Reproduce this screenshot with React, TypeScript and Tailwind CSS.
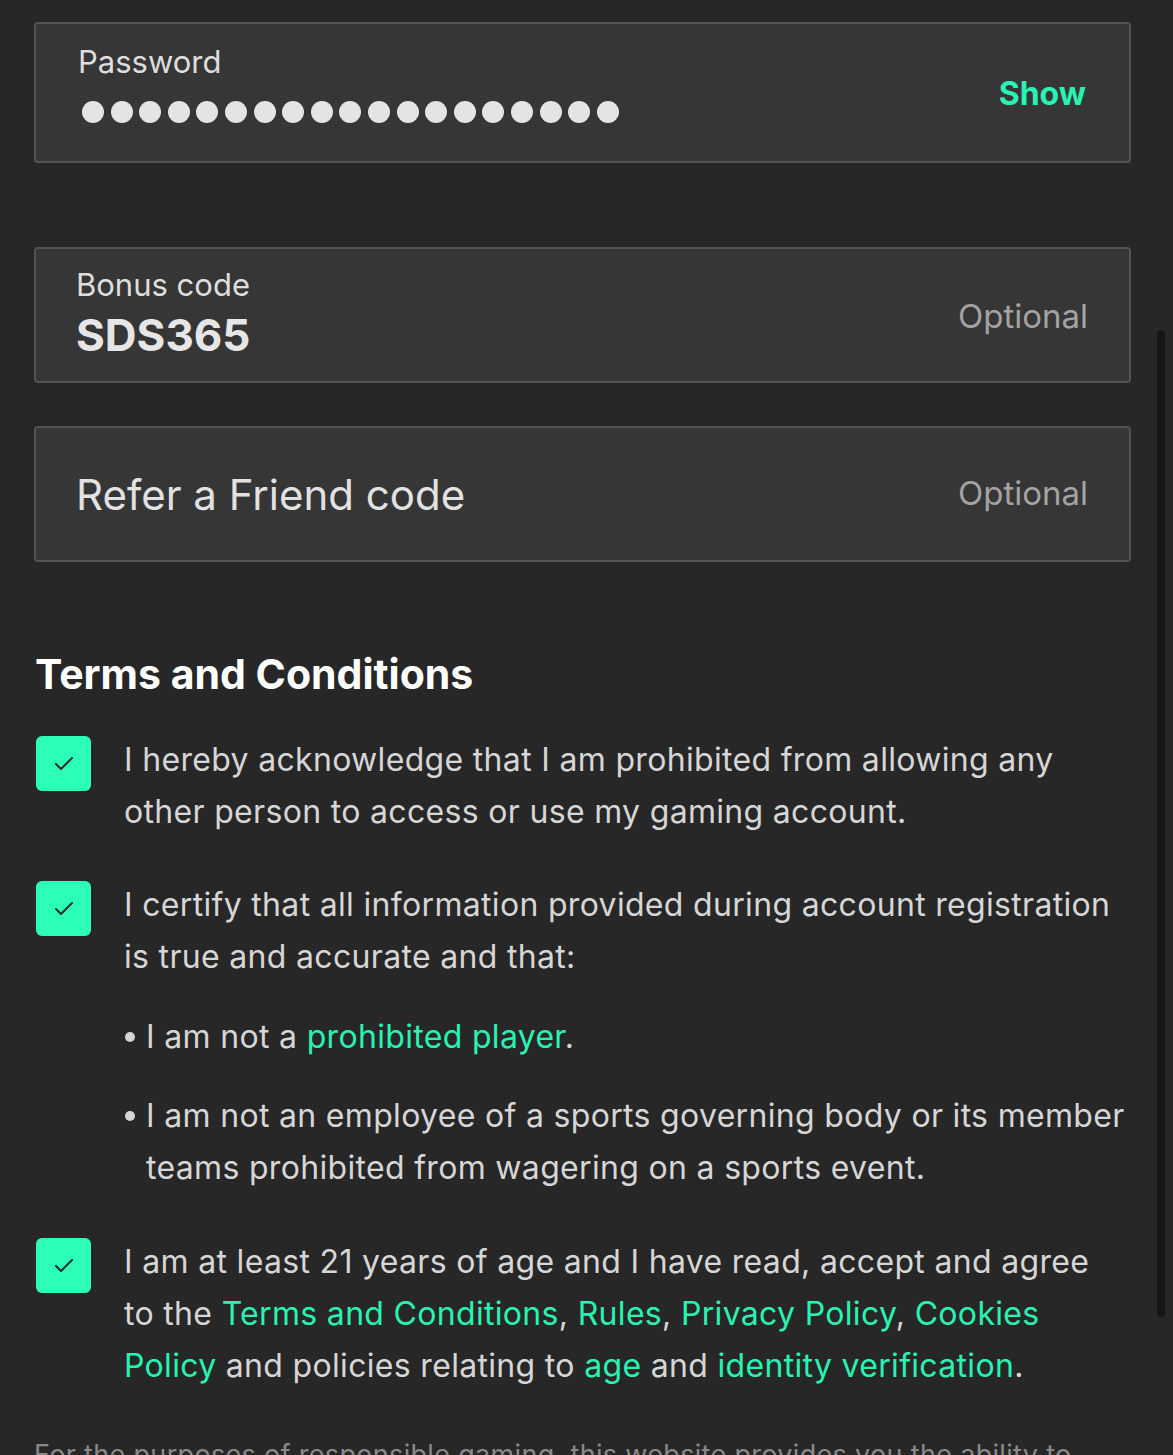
import { Check } from "lucide-react";

const green = "text-[#2af2b2]";

const Box = () => (
  <div className="mt-[2px] flex h-[55px] w-[55px] shrink-0 items-center justify-center rounded-[6px] bg-[#2bffb8]">
    <Check size={24} strokeWidth={2} className="text-[#2b2b2b]" />
  </div>
);

const Link = ({ children }: { children: React.ReactNode }) => (
  <span className={green}>{children}</span>
);

const Bullet = ({ children }: { children: React.ReactNode }) => (
  <div className="flex items-start">
    <div className="flex h-[52px] w-[22px] shrink-0 items-center">
      <span className="ml-[1px] h-[10px] w-[10px] rounded-full bg-[#d6d6d6]" />
    </div>
    <p>{children}</p>
  </div>
);

export default function App() {
  return (
    <div
      className="relative h-[1455px] w-[1173px] overflow-hidden bg-[#272727] pl-[34px] pr-[42px] pt-[22px] text-[#d6d6d6]"
      style={{ fontFamily: "Inter, 'Noto Sans', sans-serif" }}
    >
      {/* password */}
      <div className="flex h-[141px] items-start justify-between rounded-[4px] border-2 border-[#535353] bg-[#363636] pl-[42px] pr-[43px] pt-[20px]">
        <div className="flex flex-col">
          <span className="text-[31px] leading-[36px] text-[#dedede]">Password</span>
          <div className="mt-[21px] flex gap-[6.6px] pl-[4px]">
            {Array.from({ length: 19 }).map((_, i) => (
              <span key={i} className="h-[22px] w-[22px] rounded-full bg-[#e4e4e4]" />
            ))}
          </div>
        </div>
        <span className={`mt-[30px] text-[32px] font-bold leading-[40px] ${green}`}>Show</span>
      </div>

      {/* bonus code */}
      <div className="mt-[84px] flex h-[136px] items-start justify-between rounded-[4px] border-2 border-[#535353] bg-[#363636] pl-[40px] pr-[41px] pt-[18px]">
        <div className="flex flex-col">
          <span className="text-[31px] leading-[36px] text-[#dedede]">Bonus code</span>
          <span className="mt-[7px] text-[44px] font-bold leading-[50px] text-[#e6e6e6]">SDS365</span>
        </div>
        <span className="mt-[29px] text-[33px] leading-[40px] text-[#a3a3a3]">Optional</span>
      </div>

      {/* refer */}
      <div className="mt-[43px] flex h-[136px] items-center justify-between rounded-[4px] border-2 border-[#535353] bg-[#363636] pl-[40px] pr-[41px]">
        <span className="text-[42px] text-[#e2e2e2]">Refer a Friend code</span>
        <span className="text-[33px] text-[#a3a3a3]">Optional</span>
      </div>

      <h2 className="mt-[87px] pl-[1px] text-[41px] font-bold leading-[50px] text-white">
        Terms and Conditions
      </h2>

      <div className="mt-[35px] flex flex-col text-[32px] leading-[52px] tracking-[0.01em]">
        <div className="flex items-start gap-[33px] pl-[2px]">
          <Box />
          <p>
            I hereby acknowledge that I am prohibited from allowing any
            <br />
            other person to access or use my gaming account.
          </p>
        </div>

        <div className="mt-[41px] flex items-start gap-[33px] pl-[2px]">
          <Box />
          <div className="flex flex-col">
            <p>
              I certify that all information provided during account registration
              <br />
              is true and accurate and that:
            </p>
            <div className="mt-[28px] flex flex-col gap-[27px]">
              <Bullet>
                I am not a <Link>prohibited player</Link>.
              </Bullet>
              <Bullet>
                I am not an employee of a sports governing body or its member
                <br />
                teams prohibited from wagering on a sports event.
              </Bullet>
            </div>
          </div>
        </div>

        <div className="mt-[42px] flex items-start gap-[33px] pl-[2px]">
          <Box />
          <p>
            I am at least 21 years of age and I have read, accept and agree
            <br />
            to the <Link>Terms and Conditions</Link>, <Link>Rules</Link>,{" "}
            <Link>Privacy Policy</Link>, <Link>Cookies</Link>
            <br />
            <Link>Policy</Link> and policies relating to <Link>age</Link> and{" "}
            <Link>identity verification</Link>.
          </p>
        </div>

        <p className="mt-[43px] text-[27px] leading-[40px] text-[#8a8a8a]">
          For the purposes of responsible gaming, this website provides you the ability to
          <br />
          set limits on your account.
        </p>
      </div>

      {/* scrollbar */}
      <div className="absolute left-[1157px] top-[330px] h-[987px] w-[8px] rounded-full bg-[#161616]" />
    </div>
  );
}
